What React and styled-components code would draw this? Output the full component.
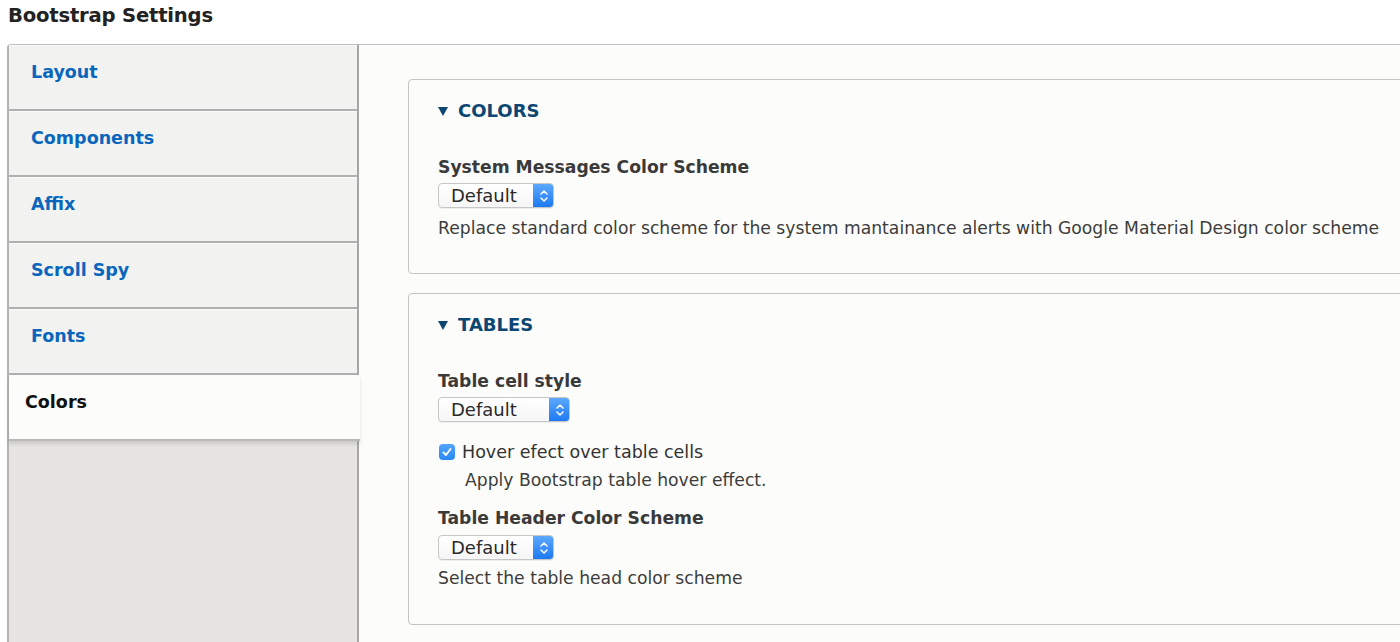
import React from "react";
import styled, { createGlobalStyle } from "styled-components";

const Global = createGlobalStyle`
  html, body { margin: 0; padding: 0; height: 100%; overflow: hidden; background: #ffffff; }
  body { font-family: "DejaVu Sans", "Liberation Sans", sans-serif; color: #333; }
  #root { height: 100%; }
`;

const Page = styled.div`
  height: 100%;
  display: flex;
  flex-direction: column;
  padding-left: 7px;
  box-sizing: border-box;
`;

const Title = styled.h1`
  margin: 0;
  padding: 4px 0 0 1px;
  font-size: 19.6px;
  line-height: 24px;
  font-weight: bold;
  color: #222;
  letter-spacing: -0.2px;
  height: 44px;
  box-sizing: border-box;
`;

const Frame = styled.div`
  flex: 1;
  display: flex;
  min-height: 0;
`;

const TabColumn = styled.nav`
  width: 348px;
  flex: none;
  display: flex;
  flex-direction: column;
  background: #e6e5e1;
  border-left: 2px solid #b3b3b3;
  border-right: 2px solid #a6a6a6;
  border-top: 1px solid #bdbdbd;
  border-top-left-radius: 4px;
  position: relative;
  z-index: 1;
`;

const Tab = styled.div`
  height: 66px;
  box-sizing: border-box;
  padding: 14px 0 0 ${(p) => (p.$active ? 16 : 22)}px;
  font-size: 17.5px;
  line-height: 24px;
  font-weight: bold;
  background: ${(p) => (p.$active ? "#fcfcfa" : "#f2f2f0")};
  color: ${(p) => (p.$active ? "#111" : "#0a66bd")};
  border-top: 1px solid #fafafa;
  border-bottom: 2px solid ${(p) => (p.$active ? "#b9b9b9" : "#b0b0b0")};
  margin-right: ${(p) => (p.$active ? "-3px" : "0")};
  box-shadow: ${(p) => (p.$active ? "0 3px 4px rgba(0,0,0,0.12)" : "none")};
  position: relative;
  z-index: ${(p) => (p.$active ? 2 : 0)};
`;

const Pane = styled.main`
  flex: 1;
  background: #fcfcfa;
  border-top: 1px solid #bdbdbd;
  padding: 34px 0 0 49px;
  display: flex;
  flex-direction: column;
  gap: 19px;
  min-width: 0;
`;

const Fieldset = styled.section`
  border: 1px solid #c4c4c4;
  border-radius: 4px;
  margin-right: -30px;
  padding: ${(p) => p.$pt}px 30px ${(p) => p.$pb}px 29px;
  background: #fcfcfa;
`;

const Legend = styled.div`
  display: flex;
  align-items: center;
  gap: 10px;
  font-size: 18px;
  line-height: 22px;
  font-weight: bold;
  color: #0c4673;
  text-transform: uppercase;
`;

const Item = styled.div`
  margin-top: ${(p) => p.$mt || 0}px;
`;

const Label = styled.div`
  font-size: 17.2px;
  line-height: 22px;
  font-weight: bold;
  color: #3a3a3a;
`;

const Description = styled.div`
  font-size: 17.2px;
  line-height: 22px;
  color: #3c3c3c;
  margin-top: ${(p) => p.$mt || 0}px;
  padding-left: ${(p) => p.$indent || 0}px;
`;

const SelectBox = styled.div`
  margin-top: ${(p) => p.$mt || 0}px;
  width: ${(p) => p.$w}px;
  height: 25px;
  box-sizing: border-box;
  display: flex;
  border: 1px solid #c6c6c6;
  border-radius: 4px;
  background: linear-gradient(#ffffff, #f6f6f6);
  overflow: hidden;
  box-shadow: 0 1px 1px rgba(0,0,0,0.06);
`;

const SelectText = styled.span`
  flex: 1;
  padding-left: 12px;
  font-size: 18px;
  line-height: 23px;
  color: #2a2a2a;
`;

const SelectArrow = styled.span`
  width: 21px;
  flex: none;
  display: flex;
  align-items: center;
  justify-content: center;
  background: linear-gradient(#5eaafd, #1c78f2);
  margin: -1px -1px -1px 0;
  border-radius: 0 4px 4px 0;
`;

const CheckRow = styled.label`
  display: flex;
  align-items: center;
  gap: 7px;
  font-size: 17.5px;
  line-height: 22px;
  color: #333;
`;

const Box = styled.span`
  width: 16px;
  height: 16px;
  border-radius: 4px;
  background: linear-gradient(#54a4fb, #2688f5);
  display: flex;
  align-items: center;
  justify-content: center;
  margin-left: 1px;
`;

const Triangle = () => (
  <svg width="10" height="9" viewBox="0 0 10 9">
    <path d="M0 0 H10 L5 9 Z" fill="#0c4673" />
  </svg>
);

const Select = ({ w, mt }) => (
  <SelectBox $w={w} $mt={mt}>
    <SelectText>Default</SelectText>
    <SelectArrow>
      <svg width="10" height="16" viewBox="0 0 10 16">
        <path d="M2 6 L5 3 L8 6 M2 10 L5 13 L8 10" fill="none" stroke="#fff" strokeWidth="1.5" strokeLinecap="round" strokeLinejoin="round" />
      </svg>
    </SelectArrow>
  </SelectBox>
);

const tabs = ["Layout", "Components", "Affix", "Scroll Spy", "Fonts", "Colors"];

export default function App() {
  return (
    <>
      <Global />
      <Page>
        <Title>Bootstrap Settings</Title>
        <Frame>
          <TabColumn>
            {tabs.map((t) => (
              <Tab key={t} $active={t === "Colors"}>{t}</Tab>
            ))}
          </TabColumn>
          <Pane>
            <Fieldset $pt={20} $pb={34}>
              <Legend><Triangle />Colors</Legend>
              <Item $mt={34}>
                <Label>System Messages Color Scheme</Label>
                <Select w={116} mt={5} />
                <Description $mt={9}>
                  Replace standard color scheme for the system mantainance alerts with Google Material Design color scheme
                </Description>
              </Item>
            </Fieldset>
            <Fieldset $pt={20} $pb={35}>
              <Legend><Triangle />Tables</Legend>
              <Item $mt={34}>
                <Label>Table cell style</Label>
                <Select w={132} mt={5} />
              </Item>
              <Item $mt={19}>
                <CheckRow>
                  <Box>
                    <svg width="12" height="12" viewBox="0 0 12 12">
                      <path d="M2.5 6.5 L5 9 L9.5 3" fill="none" stroke="#fff" strokeWidth="1.8" strokeLinecap="round" strokeLinejoin="round" />
                    </svg>
                  </Box>
                  Hover efect over table cells
                </CheckRow>
                <Description $mt={6} $indent={27}>Apply Bootstrap table hover effect.</Description>
              </Item>
              <Item $mt={16}>
                <Label>Table Header Color Scheme</Label>
                <Select w={116} mt={6} />
                <Description $mt={7}>Select the table head color scheme</Description>
              </Item>
            </Fieldset>
          </Pane>
        </Frame>
      </Page>
    </>
  );
}
